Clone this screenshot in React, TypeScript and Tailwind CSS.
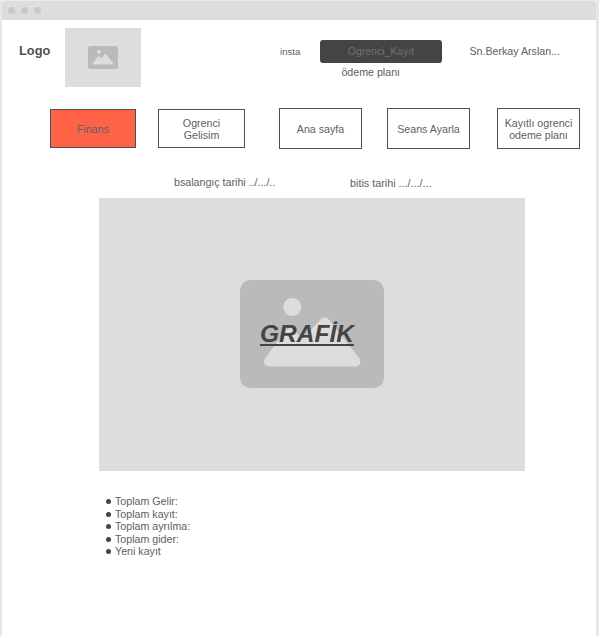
import React from "react";

function ImageGlyph({ className }: { className: string }) {
  return (
    <svg viewBox="0 0 144 108" preserveAspectRatio="none" className={className}>
      <rect width="144" height="108" rx="10.5" fill="#bababa" />
      <circle cx="52.3" cy="27" r="9.1" fill="#dddddd" />
      <path
        d="M29 81.5 L50 53 L63 66 L84.8 42.5 L115.5 81.5 Z"
        fill="#dddddd"
        stroke="#dddddd"
        strokeWidth="10"
        strokeLinejoin="round"
      />
    </svg>
  );
}

const totals = ["Toplam Gelir:", "Toplam kayıt:", "Toplam ayrılma:", "Toplam gider:", "Yeni kayıt"];

const tab = "flex shrink-0 items-center justify-center border border-[#505050] pt-px text-center";

export default function App() {
  return (
    <div className="h-[638px] w-[603px] overflow-hidden bg-white font-['Liberation_Sans',Arial,sans-serif] text-[10.67px] leading-[12.5px] text-[#606060]">
      <div className="flex h-[636px] w-[599px] flex-col border-t border-r-[3px] border-l-2 border-t-[#ececec] border-r-[#e7e7e7] border-l-[#e7e7e7] whitespace-nowrap">
        <header className="flex h-[19px] shrink-0 items-center gap-[5.7px] rounded-t-[3px] bg-[#dddddd] pl-[6.3px]">
          <span className="size-[7px] rounded-full bg-[#c9c9c9]" />
          <span className="size-[7px] rounded-full bg-[#c9c9c9]" />
          <span className="size-[7px] rounded-full bg-[#c9c9c9]" />
        </header>

        <section className="flex h-[67px] shrink-0 items-start pt-2">
          <h1 className="ml-[17px] w-[46px] pt-[15px] text-[12.8px] leading-[15px] font-bold text-[#505050]">Logo</h1>
          <div className="flex h-[59px] w-[76px] shrink-0 items-center justify-center bg-[#dddddd]">
            <ImageGlyph className="h-[23px] w-[30px]" />
          </div>
          <span className="ml-[139px] w-[40px] pt-[18px] text-[9.6px]">insta</span>
          <div className="w-[122px] pt-3">
            <button className="block h-[23px] w-[122px] rounded-[3px] bg-[#444444] text-[10.5px] text-[#707070]">Ogrenci_Kayıt</button>
            <p className="mt-[3px] pl-[21.4px]">ödeme planı</p>
          </div>
          <span className="ml-[27.4px] pt-[17px]">Sn.Berkay Arslan...</span>
        </section>

        <nav className="mt-[21px] flex h-[41px] shrink-0 items-center pl-[48px]">
          <div className={`${tab} h-[39px] w-[86px] bg-[#ff6347]`}>Finans</div>
          <div className={`${tab} ml-[22px] h-[39px] w-[87px]`}>Ogrenci<br />Gelisim</div>
          <div className={`${tab} ml-[34px] h-[41px] w-[83px]`}>Ana sayfa</div>
          <div className={`${tab} ml-[25px] h-[41px] w-[83px]`}>Seans Ayarla</div>
          <div className={`${tab} ml-[27px] h-[41px] w-[83px]`}>Kayıtlı ogrenci<br />odeme planı</div>
        </nav>

        <section className="flex h-[49px] shrink-0 pt-[27px] pl-[172px]">
          <span className="w-[176px]">bsalangıç tarihi ../.../..</span>
          <span className="pt-px text-[10.8px]">bitis tarihi .../.../...</span>
        </section>

        <figure className="relative ml-[97px] flex h-[273px] w-[426px] shrink-0 items-start justify-center bg-[#dddddd] pt-[82px]">
          <ImageGlyph className="h-[108px] w-[144px]" />
          <figcaption className="absolute top-[121px] left-[161px] text-[24.5px] leading-[30px] font-bold text-[#444444] italic underline decoration-[1.5px] underline-offset-[2px]">GRAFİK</figcaption>
        </figure>

        <ul className="mt-[24px] ml-[104px]">
          {totals.map((label) => (
            <li key={label} className="flex items-center gap-1">
              <span className="mt-px size-[5px] rounded-full bg-[#444444]" />
              {label}
            </li>
          ))}
        </ul>
      </div>
    </div>
  );
}
